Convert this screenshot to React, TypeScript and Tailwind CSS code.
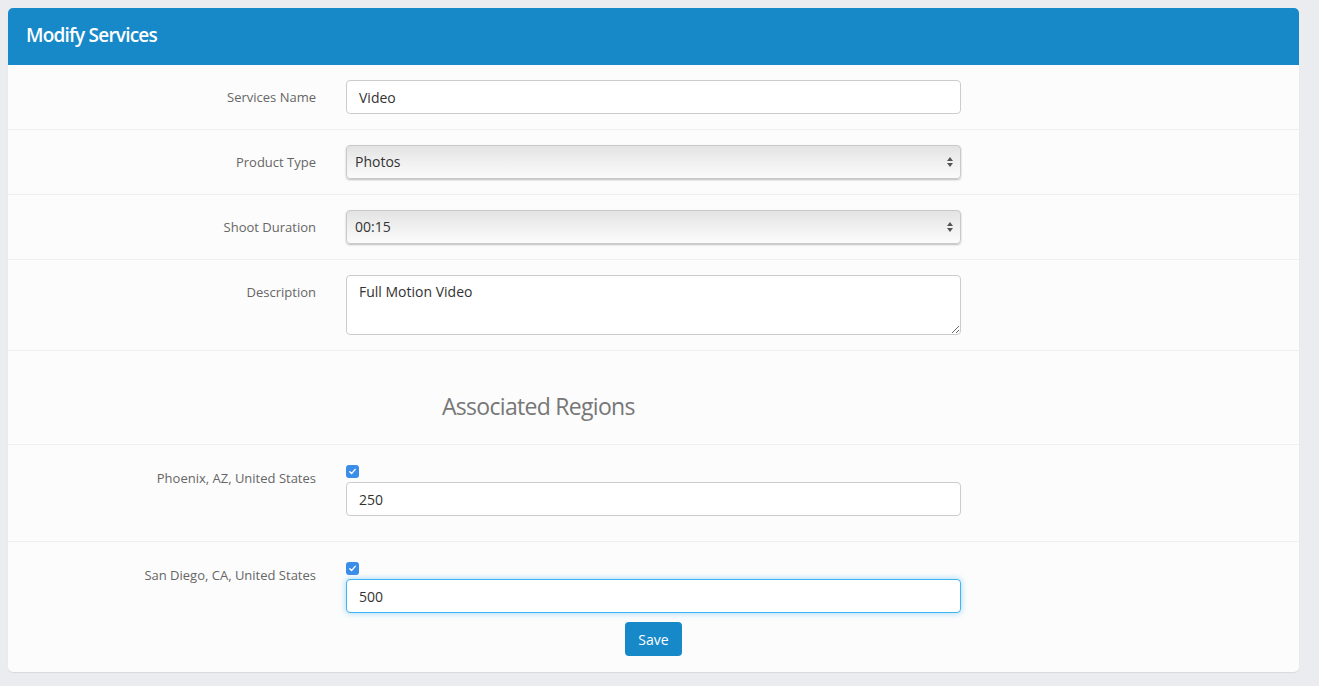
import { useState } from "react";

const font = { fontFamily: '"Open Sans", "Liberation Sans", sans-serif' };

function Row({
  label,
  children,
  className = "",
}: {
  label: string;
  children: React.ReactNode;
  className?: string;
}) {
  return (
    <div className={`flex border-b border-[#efeff2] ${className}`}>
      <label className="w-[308px] shrink-0 pt-[8px] text-right text-[13px] text-[#666]">
        {label}
      </label>
      <div className="ml-[30px] w-[615px]">{children}</div>
    </div>
  );
}

function FakeSelect({ value }: { value: string }) {
  return (
    <div className="flex h-[34px] w-[615px] items-center justify-between rounded-[4px] border border-[#c9c9c9] bg-gradient-to-b from-[#e3e3e3] via-[#f0f0f0] to-[#fbfbfb] pl-[8px] pr-[6px] text-[14px] text-[#333] shadow-[0_1px_2px_rgba(0,0,0,0.25)]">
      <span className="-mt-[1px]">{value}</span>
      <svg width="8" height="12" viewBox="0 0 8 12" className="text-[#555]">
        <path d="M4 1 L7 5 H1 Z" fill="currentColor" />
        <path d="M4 11 L7 7 H1 Z" fill="currentColor" />
      </svg>
    </div>
  );
}

function Check() {
  return (
    <span className="flex h-[13px] w-[13px] items-center justify-center rounded-[3px] bg-[#3b8ee8]">
      <svg width="9" height="9" viewBox="0 0 9 9">
        <path
          d="M1.8 4.8 L3.6 6.6 L7.2 2.4"
          fill="none"
          stroke="white"
          strokeWidth="1.4"
          strokeLinecap="round"
          strokeLinejoin="round"
        />
      </svg>
    </span>
  );
}

function RegionRow({
  label,
  value,
  onChange,
  focused,
  children,
}: {
  label: string;
  value: string;
  onChange: (v: string) => void;
  focused?: boolean;
  children?: React.ReactNode;
}) {
  return (
    <div className="flex items-start pt-[24px]">
      <label className="w-[308px] shrink-0 text-right text-[13px] text-[#666]">
        {label}
      </label>
      <div className="ml-[30px] flex w-[615px] flex-col">
        <span className="-mt-[4px] mb-[4px]">
          <Check />
        </span>
        <input
          value={value}
          onChange={(e) => onChange(e.target.value)}
          className={
            focused
              ? "h-[34px] w-full rounded-[4px] border border-[#3fb4f2] bg-white px-[12px] text-[14px] text-[#333] shadow-[0_0_6px_rgba(63,180,242,0.5)] outline-none"
              : "h-[34px] w-full rounded-[4px] border border-[#ccc] bg-white px-[12px] text-[14px] text-[#333] outline-none"
          }
        />
        {children}
      </div>
    </div>
  );
}

export default function App() {
  const [name, setName] = useState("Video");
  const [desc, setDesc] = useState("Full Motion Video");
  const [phx, setPhx] = useState("250");
  const [sd, setSd] = useState("500");

  return (
    <div className="min-h-[686px] bg-[#ebecf0] p-[8px] pr-[20px]" style={font}>
      <div className="overflow-hidden rounded-[5px] bg-[#fcfcfc] shadow-[0_1px_1px_rgba(0,0,0,0.08)]">
        <div className="flex h-[57px] items-center bg-[#1788c8] px-[18px]">
          <h1 className="-mt-[3px] text-[19px] font-semibold tracking-[-0.8px] text-white">
            Modify Services
          </h1>
        </div>

        <Row label="Services Name" className="h-[65px] items-start pt-[15px]">
          <input
            value={name}
            onChange={(e) => setName(e.target.value)}
            className="h-[34px] w-full rounded-[4px] border border-[#ccc] bg-white px-[12px] text-[14px] text-[#333] outline-none"
          />
        </Row>

        <Row label="Product Type" className="h-[65px] items-start pt-[15px]">
          <FakeSelect value="Photos" />
        </Row>

        <Row label="Shoot Duration" className="h-[65px] items-start pt-[15px]">
          <FakeSelect value="00:15" />
        </Row>

        <Row label="Description" className="h-[91px] items-start pt-[15px]">
          <textarea
            value={desc}
            onChange={(e) => setDesc(e.target.value)}
            className="block h-[60px] w-full rounded-[4px] border border-[#ccc] bg-white px-[12px] py-[5px] text-[14px] text-[#333] outline-none"
          />
        </Row>

        <div className="flex h-[94px] items-center border-b border-[#efeff2] pl-[434px] pt-[18px]">
          <h2 className="text-[23px] tracking-[-0.7px] text-[#777]">
            Associated Regions
          </h2>
        </div>

        <div className="h-[97px] border-b border-[#efeff2]">
          <RegionRow label="Phoenix, AZ, United States" value={phx} onChange={setPhx} />
        </div>

        <RegionRow
          label="San Diego, CA, United States"
          value={sd}
          onChange={setSd}
          focused
        >
          <div className="mb-[16px] mt-[9px] flex justify-center">
            <button className="h-[34px] w-[57px] rounded-[4px] bg-[#1788c8] text-[14px] text-white">
              Save
            </button>
          </div>
        </RegionRow>
      </div>
    </div>
  );
}
